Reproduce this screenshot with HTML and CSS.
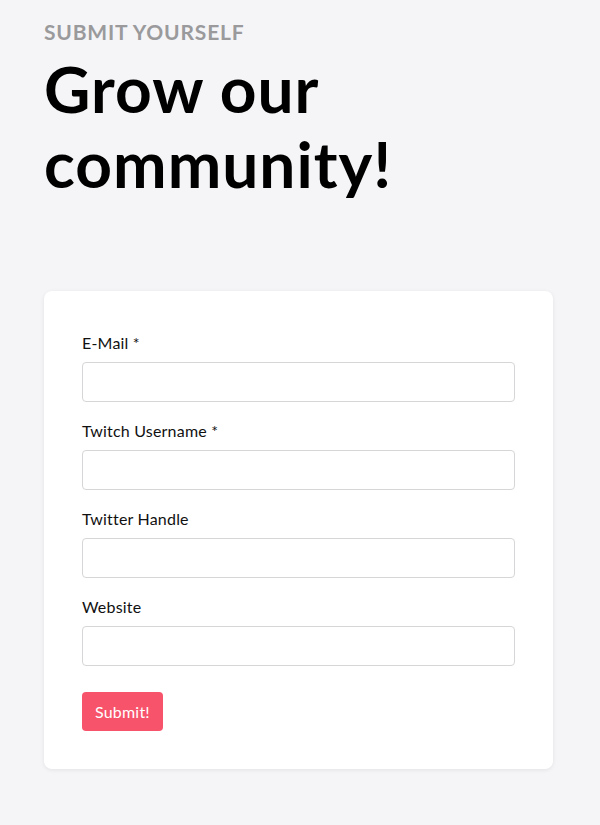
FILE: index.html
```html
<!DOCTYPE html>
<html lang="en">
<head>
  <meta charset="UTF-8">
  <title>Submit Yourself</title>
  <link rel="stylesheet" href="styles.css">
</head>
<body>
  <header class="intro">
    <p class="eyebrow">Submit Yourself</p>
    <h1>Grow our community!</h1>
  </header>

  <form class="card">
    <label class="field">
      <span>E-Mail *</span>
      <input type="email">
    </label>
    <label class="field">
      <span>Twitch Username *</span>
      <input type="text">
    </label>
    <label class="field">
      <span>Twitter Handle</span>
      <input type="text">
    </label>
    <label class="field">
      <span>Website</span>
      <input type="text">
    </label>
    <button type="button" class="submit">Submit!</button>
  </form>
</body>
</html>
```

FILE: styles.css
```css
:root {
  --bg-color: #f5f5f7;
  --panel-color: #ffffff;
  --text-color: #111;
  --muted: #9a9a9c;
  --border-color: #d6d6d8;
  --accent: #f7546c;
}

body {
  font-family: Lato, 'Open Sans', sans-serif;
  background: var(--bg-color);
  margin: 0;
  padding: 20px 47px 40px 44px;
  color: var(--text-color);
}

.eyebrow {
  margin: 0;
  font-size: 21px;
  font-weight: 700;
  letter-spacing: 0.8px;
  text-transform: uppercase;
  color: var(--muted);
  line-height: 24px;
}

h1 {
  margin: 7px 0 0;
  font-size: 64px;
  font-weight: 700;
  letter-spacing: 1px;
  line-height: 75px;
  color: #000;
  max-width: 400px;
}

.card {
  margin-top: 90px;
  background: var(--panel-color);
  border-radius: 8px;
  box-shadow: 0 1px 4px rgba(0, 0, 0, 0.08);
  padding: 42px 38px 38px;
  display: flex;
  flex-direction: column;
  align-items: flex-start;
}

.field {
  display: flex;
  flex-direction: column;
  width: 100%;
  margin-bottom: 19px;
  font-size: 16px;
  letter-spacing: 0.2px;
}

.field span {
  margin-bottom: 10px;
}

.field input {
  box-sizing: border-box;
  width: 100%;
  height: 40px;
  border: 1px solid var(--border-color);
  border-radius: 4px;
  background: #fff;
  font: inherit;
}

.submit {
  margin-top: 7px;
  background: var(--accent);
  color: #fff;
  border: none;
  border-radius: 4px;
  padding: 0 13px;
  height: 39px;
  font-family: inherit;
  font-size: 16px;
  letter-spacing: 0.2px;
  cursor: pointer;
}
```
